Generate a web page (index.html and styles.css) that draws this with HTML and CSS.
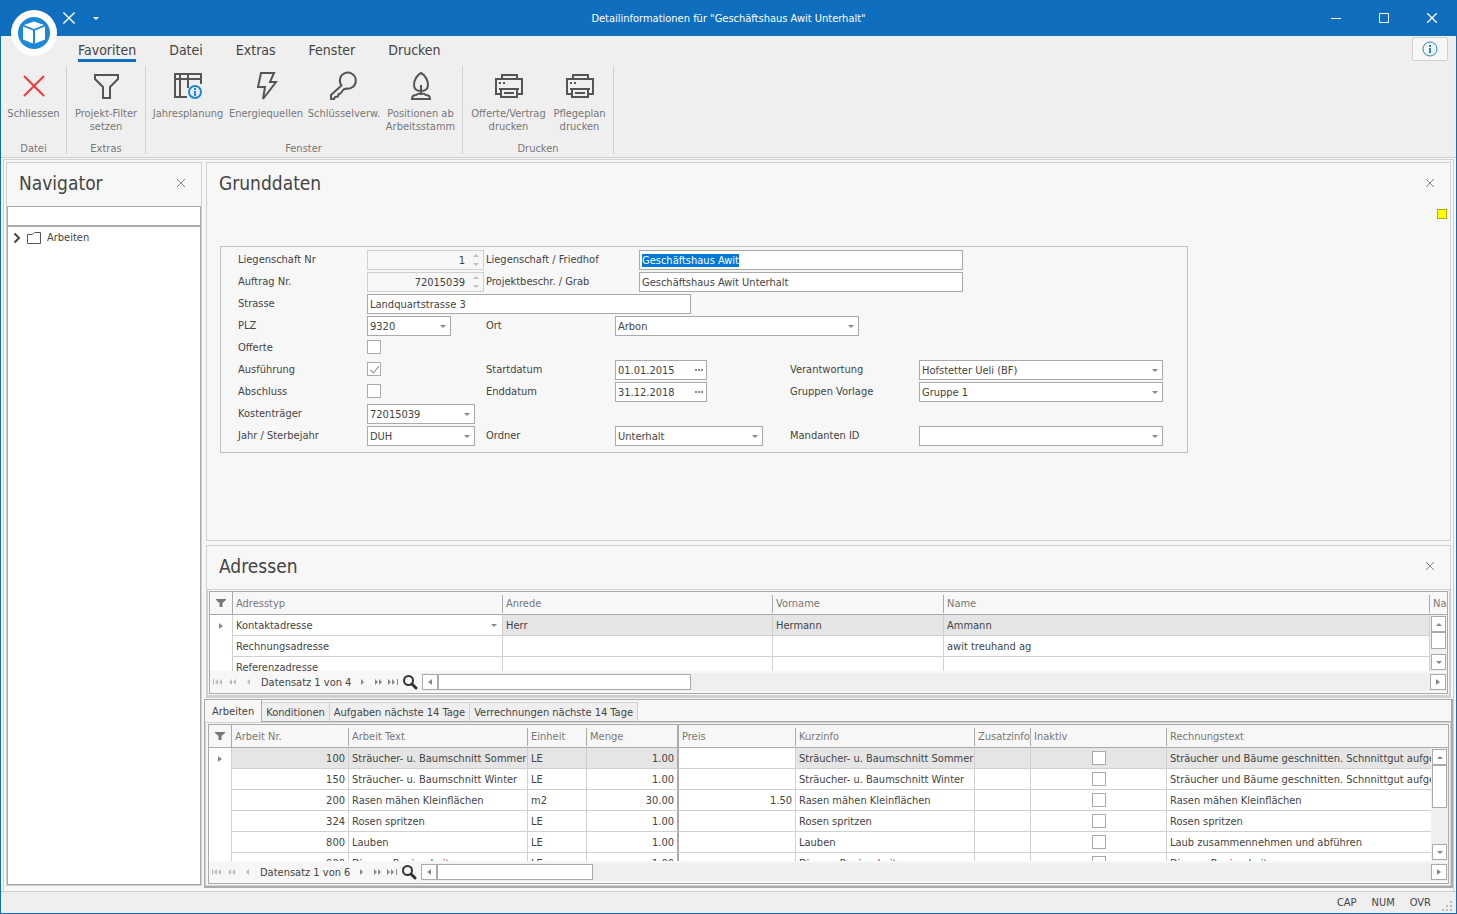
FILE: index.html
```html
<!DOCTYPE html>
<html lang="de">
<head>
<meta charset="utf-8">
<title>Detailinformationen für "Geschäftshaus Awit Unterhalt"</title>
<link rel="stylesheet" href="styles.css">
</head>
<body>
<svg class="sprite" aria-hidden="true">
  <symbol id="i-x" viewBox="0 0 10 10"><path d="M1 1l8 8M9 1l-8 8"/></symbol>
  <symbol id="i-prev" viewBox="0 0 12 10"><path d="M8 2v6L5 5z"/></symbol>
  <symbol id="i-prev2" viewBox="0 0 12 10"><path d="M5 2v6L2 5zM9 2v6L6 5z"/></symbol>
  <symbol id="i-first" viewBox="0 0 12 10"><path d="M1 2h1v6H1zM6 2v6L3 5zM10 2v6L7 5z"/></symbol>
  <symbol id="i-next" viewBox="0 0 12 10"><path d="M4 2v6l3-3z"/></symbol>
  <symbol id="i-next2" viewBox="0 0 12 10"><path d="M3 2v6l3-3zM7 2v6l3-3z"/></symbol>
  <symbol id="i-last" viewBox="0 0 12 10"><path d="M1 2v6l3-3zM5 2v6l3-3zM10 2h1v6h-1z"/></symbol>
  <symbol id="i-search" viewBox="0 0 16 16"><circle cx="6.500" cy="6.500" r="4.500" fill="none" stroke="#333" stroke-width="2"/><path d="M10 10l4 4" stroke="#333" stroke-width="3" stroke-linecap="round"/></symbol>
  <symbol id="i-funnel" viewBox="0 0 10 8"><path d="M0 0h10v1L6.500 4v4h-3V4L0 1z"/></symbol>
  <symbol id="i-printer" viewBox="0 0 32 32"><g fill="none" stroke="#555" stroke-width="2"><path d="M9 9V5h15v4M7 24H3V9h26v15h-4"/><path d="M6 19h20M8 19v8h16v-8M11 23h10"/></g><path d="M6 12h2v2H6zM10 12h2v2h-2z" fill="#555"/></symbol>
</svg>
<div class="window">
  <header class="titlebar">
    <button class="logo" aria-label="Anwendungsmenü">
      <svg viewBox="0 0 46 46"><circle cx="23" cy="23" r="23" fill="#fff"/><circle cx="23" cy="23" r="16" fill="#1e88d8"/><path d="M23 11.500l10 3.500-10 4-10-4z" fill="#fff"/><path d="M12 16.500l10 4v13l-10-4zM34 16.500l-10 4v13l10-4z" fill="#fff"/></svg>
    </button>
    <div class="quick">
      <button aria-label="Schliessen"><svg class="line" width="14" height="14"><use href="#i-x"/></svg></button>
      <button aria-label="Anpassen"><span class="tri-down"></span></button>
    </div>
    <h1>Detailinformationen für "Geschäftshaus Awit Unterhalt"</h1>
    <div class="syskeys">
      <button aria-label="Minimieren"><svg width="10" height="10"><path d="M0 5.500h10" stroke="#fff"/></svg></button>
      <button aria-label="Maximieren"><svg width="10" height="10"><path d="M.5.5h9v9h-9z" fill="none" stroke="#fff"/></svg></button>
      <button aria-label="Fenster schliessen"><svg width="10" height="10"><path d="M0 0l10 10M10 0L0 10" stroke="#fff" stroke-width="1.300"/></svg></button>
    </div>
  </header>

  <section class="ribbon">
    <nav class="tabs">
      <button class="on">Favoriten</button><button>Datei</button><button>Extras</button><button>Fenster</button><button>Drucken</button>
      <button class="info" aria-label="Info"><svg width="16" height="16" fill="none" stroke="#1e88d0"><circle cx="8" cy="8" r="7"/><path d="M8 4v2M8 7v5" stroke-width="2"/></svg></button>
    </nav>
    <div class="groups">
      <div class="group g-close"><div class="tools">
        <button><svg viewBox="0 0 32 32"><path d="M6 6l20 20M26 6L6 26" stroke="#f03a35" stroke-width="2"/></svg>Schliessen</button>
      </div><p>Datei</p></div>
      <div class="group g-extras"><div class="tools">
        <button><svg viewBox="0 0 32 32"><path d="M5 5h23v4l-8 8v11h-7V17L5 9z" fill="none" stroke="#555" stroke-width="2"/></svg>Projekt-Filter<br>setzen</button>
      </div><p>Extras</p></div>
      <div class="group g-window"><div class="tools">
        <button class="w78"><svg viewBox="0 0 32 32"><g fill="none" stroke="#555" stroke-width="2"><path d="M15 27H3V4h26v10M3 9h26M8 4v23M16 4v14"/></g><circle cx="23" cy="22" r="6" fill="#efefef" stroke="#1e88d0" stroke-width="2"/><path d="M23 18v2M23 21v5" stroke="#1e88d0" stroke-width="2"/></svg>Jahresplanung</button>
        <button class="w78"><svg viewBox="0 0 32 32"><path d="M11 3h13l-4 9h6L13 29l2-12H8z" fill="none" stroke="#555" stroke-width="2"/></svg>Energiequellen</button>
        <button class="w78"><svg viewBox="0 0 32 32"><path d="M13.500 15.500a8 8 0 1 1 5 3l-3 1-3 4-2 .5-.5 2.500-3 .5-1 2H3v-4z" fill="none" stroke="#555" stroke-width="2" stroke-linejoin="round"/></svg>Schlüsselverw.</button>
        <button class="w75"><svg viewBox="0 0 32 32"><g fill="none" stroke="#555" stroke-width="2"><path d="M16 3c4 2 7 7 7 12 0 4-3 6-7 6s-7-2-7-6c0-5 3-10 7-12zM16 15v10M7 29c0-3 2-4 4-4 2-2 8-2 10 0 3 0 4 1 4 4z"/></g></svg>Positionen ab<br>Arbeitsstamm</button>
      </div><p>Fenster</p></div>
      <div class="group"><div class="tools">
        <button class="w83"><svg><use href="#i-printer"/></svg>Offerte/Vertrag<br>drucken</button>
        <button class="w59"><svg><use href="#i-printer"/></svg>Pflegeplan<br>drucken</button>
      </div><p>Drucken</p></div>
    </div>
  </section>

  <main class="dock">
    <aside class="navigator">
      <header class="panel-head"><h2>Navigator</h2><button aria-label="Navigator schliessen"><svg class="line" width="10" height="10"><use href="#i-x"/></svg></button></header>
      <input class="nav-search" type="text" aria-label="Suche">
      <ul class="tree"><li>
        <svg width="8" height="12"><path d="M1.500 1.500L6 6l-4.500 4.500" fill="none" stroke="#444" stroke-width="2"/></svg>
        <svg width="14" height="12"><path d="M.5 2.500h5l2-2h6v11H.5z" fill="none" stroke="#555"/></svg>
        <span>Arbeiten</span></li></ul>
    </aside>

    <div class="content">
      <section class="panel basics">
        <header class="panel-head"><h2>Grunddaten</h2><button aria-label="Grunddaten schliessen"><svg class="line" width="10" height="10"><use href="#i-x"/></svg></button></header>
        <div class="marker-row"><span class="marker"></span></div>
        <form class="form">
          <label class="c1 r1" for="f-lnr">Liegenschaft Nr</label>
          <div class="spin c2 r1"><input id="f-lnr" value="1" disabled><span><i class="tri-up"></i><i class="tri-down"></i></span></div>
          <label class="c3 r1" for="f-lg">Liegenschaft / Friedhof</label>
          <input class="c4b r1 w324" id="f-lg" value="Geschäftshaus Awit" autofocus>
          <label class="c1 r2" for="f-anr">Auftrag Nr.</label>
          <div class="spin c2 r2"><input id="f-anr" value="72015039" disabled><span><i class="tri-up"></i><i class="tri-down"></i></span></div>
          <label class="c3 r2" for="f-pb">Projektbeschr. / Grab</label>
          <input class="c4b r2 w324" id="f-pb" value="Geschäftshaus Awit Unterhalt">
          <label class="c1 r3" for="f-str">Strasse</label>
          <input class="c2 r3 w324" id="f-str" value="Landquartstrasse 3">
          <label class="c1 r4" for="f-plz">PLZ</label>
          <div class="combo c2 r4 w84"><select id="f-plz"><option>9320</option></select><i class="tri-down"></i></div>
          <label class="c3 r4" for="f-ort">Ort</label>
          <div class="combo c4 r4 w244"><select id="f-ort"><option>Arbon</option></select><i class="tri-down"></i></div>
          <label class="c1 r5" for="f-off">Offerte</label><input class="c2 r5" type="checkbox" id="f-off">
          <label class="c1 r6" for="f-aus">Ausführung</label><input class="c2 r6" type="checkbox" id="f-aus" checked>
          <label class="c3 r6" for="f-sd">Startdatum</label>
          <div class="date c4 r6"><input id="f-sd" value="01.01.2015"><button type="button" aria-label="Startdatum wählen"><i></i><i></i><i></i></button></div>
          <label class="c5 r6" for="f-ver">Verantwortung</label>
          <div class="combo c6 r6 w244"><select id="f-ver"><option>Hofstetter Ueli (BF)</option></select><i class="tri-down"></i></div>
          <label class="c1 r7" for="f-abs">Abschluss</label><input class="c2 r7" type="checkbox" id="f-abs">
          <label class="c3 r7" for="f-ed">Enddatum</label>
          <div class="date c4 r7"><input id="f-ed" value="31.12.2018"><button type="button" aria-label="Enddatum wählen"><i></i><i></i><i></i></button></div>
          <label class="c5 r7" for="f-gv">Gruppen Vorlage</label>
          <div class="combo c6 r7 w244"><select id="f-gv"><option>Gruppe 1</option></select><i class="tri-down"></i></div>
          <label class="c1 r8" for="f-kt">Kostenträger</label>
          <div class="combo c2 r8 w108"><select id="f-kt"><option>72015039</option></select><i class="tri-down"></i></div>
          <label class="c1 r9" for="f-js">Jahr / Sterbejahr</label>
          <div class="combo c2 r9 w108"><select id="f-js"><option>DUH</option></select><i class="tri-down"></i></div>
          <label class="c3 r9" for="f-or">Ordner</label>
          <div class="combo c4 r9 w148"><select id="f-or"><option>Unterhalt</option></select><i class="tri-down"></i></div>
          <label class="c5 r9" for="f-mi">Mandanten ID</label>
          <div class="combo c6 r9 w244"><select id="f-mi"><option></option></select><i class="tri-down"></i></div>
        </form>
      </section>

      <section class="panel addresses">
        <header class="panel-head"><h2>Adressen</h2><button aria-label="Adressen schliessen"><svg class="line" width="10" height="10"><use href="#i-x"/></svg></button></header>
        <div class="panel-body"><div class="grid">
          <div class="rows rows-a">
            <table>
              <colgroup><col class="k23"><col class="k270"><col class="k270"><col class="k171"><col><col class="k17"></colgroup>
              <thead><tr><th class="ind"><svg width="10" height="8"><use href="#i-funnel"/></svg></th><th>Adresstyp</th><th>Anrede</th><th>Vorname</th><th>Name</th><th>Name</th></tr></thead>
              <tbody>
                <tr class="sel"><td class="ind"><i class="tri-right"></i></td><td class="edit"><div class="cellcombo">Kontaktadresse<i class="tri-down"></i></div></td><td>Herr</td><td>Hermann</td><td>Ammann</td><td></td></tr>
                <tr><td class="ind"></td><td>Rechnungsadresse</td><td></td><td></td><td>awit treuhand ag</td><td></td></tr>
                <tr><td class="ind"></td><td>Referenzadresse</td><td></td><td></td><td></td><td></td></tr>
              </tbody>
            </table>
            <div class="vbar"><button aria-label="Nach oben"><i class="tri-up"></i></button><span class="vthumb short"></span><button class="end" aria-label="Nach unten"><i class="tri-down"></i></button></div>
          </div>
          <div class="pager">
            <div class="steps">
              <button class="dim" aria-label="Erster"><svg><use href="#i-first"/></svg></button><button class="dim" aria-label="Seite zurück"><svg><use href="#i-prev2"/></svg></button><button class="dim" aria-label="Zurück"><svg><use href="#i-prev"/></svg></button>
              <span>Datensatz 1 von 4</span>
              <button aria-label="Weiter"><svg><use href="#i-next"/></svg></button><button aria-label="Seite vor"><svg><use href="#i-next2"/></svg></button><button aria-label="Letzter"><svg><use href="#i-last"/></svg></button>
              <button class="find" aria-label="Suchen"><svg><use href="#i-search"/></svg></button>
            </div>
            <div class="hbar"><button aria-label="Nach links"><i class="tri-left"></i></button><span class="hthumb wide"></span><button class="end" aria-label="Nach rechts"><i class="tri-right"></i></button></div>
          </div>
        </div></div>
      </section>

      <section class="works">
        <nav class="subtabs"><button class="on">Arbeiten</button><button>Konditionen</button><button>Aufgaben nächste 14 Tage</button><button>Verrechnungen nächste 14 Tage</button></nav>
        <div class="works-body"><div class="grid">
          <div class="rows rows-w">
            <table>
              <colgroup><col class="k23"><col class="k117"><col class="k179"><col class="k59"><col class="k92"><col class="k117"><col class="k179"><col class="k56"><col class="k136"><col></colgroup>
              <thead><tr><th class="ind"><svg width="10" height="8"><use href="#i-funnel"/></svg></th><th>Arbeit Nr.</th><th>Arbeit Text</th><th>Einheit</th><th class="fix">Menge</th><th>Preis</th><th>Kurzinfo</th><th>Zusatzinfo</th><th>Inaktiv</th><th>Rechnungstext</th></tr></thead>
              <tbody>
                <tr class="sel"><td class="ind"><i class="tri-right"></i></td><td class="num">100</td><td>Sträucher- u. Baumschnitt Sommer</td><td>LE</td><td class="num fix">1.00</td><td class="edit"></td><td>Sträucher- u. Baumschnitt Sommer</td><td></td><td class="chk"><input type="checkbox" aria-label="Inaktiv 100"></td><td>Sträucher und Bäume geschnitten. Schnnittgut aufgeladen</td></tr>
                <tr><td class="ind"></td><td class="num">150</td><td>Sträucher- u. Baumschnitt Winter</td><td>LE</td><td class="num fix">1.00</td><td></td><td>Sträucher- u. Baumschnitt Winter</td><td></td><td class="chk"><input type="checkbox" aria-label="Inaktiv 150"></td><td>Sträucher und Bäume geschnitten. Schnnittgut aufgeladen</td></tr>
                <tr><td class="ind"></td><td class="num">200</td><td>Rasen mähen Kleinflächen</td><td>m2</td><td class="num fix">30.00</td><td class="num">1.50</td><td>Rasen mähen Kleinflächen</td><td></td><td class="chk"><input type="checkbox" aria-label="Inaktiv 200"></td><td>Rasen mähen Kleinflächen</td></tr>
                <tr><td class="ind"></td><td class="num">324</td><td>Rosen spritzen</td><td>LE</td><td class="num fix">1.00</td><td></td><td>Rosen spritzen</td><td></td><td class="chk"><input type="checkbox" aria-label="Inaktiv 324"></td><td>Rosen spritzen</td></tr>
                <tr><td class="ind"></td><td class="num">800</td><td>Lauben</td><td>LE</td><td class="num fix">1.00</td><td></td><td>Lauben</td><td></td><td class="chk"><input type="checkbox" aria-label="Inaktiv 800"></td><td>Laub zusammennehmen und abführen</td></tr>
                <tr><td class="ind"></td><td class="num">900</td><td>Diverse Regiearbeit</td><td>LE</td><td class="num fix">1.00</td><td></td><td>Diverse Regiearbeit</td><td></td><td class="chk"><input type="checkbox" aria-label="Inaktiv 900"></td><td>Diverse Regiearbeit</td></tr>
              </tbody>
            </table>
            <div class="vbar"><button aria-label="Nach oben"><i class="tri-up"></i></button><span class="vthumb"></span><button class="end" aria-label="Nach unten"><i class="tri-down"></i></button></div>
          </div>
          <div class="pager">
            <div class="steps">
              <button class="dim" aria-label="Erster"><svg><use href="#i-first"/></svg></button><button class="dim" aria-label="Seite zurück"><svg><use href="#i-prev2"/></svg></button><button class="dim" aria-label="Zurück"><svg><use href="#i-prev"/></svg></button>
              <span>Datensatz 1 von 6</span>
              <button aria-label="Weiter"><svg><use href="#i-next"/></svg></button><button aria-label="Seite vor"><svg><use href="#i-next2"/></svg></button><button aria-label="Letzter"><svg><use href="#i-last"/></svg></button>
              <button class="find" aria-label="Suchen"><svg><use href="#i-search"/></svg></button>
            </div>
            <div class="hbar"><button aria-label="Nach links"><i class="tri-left"></i></button><span class="hthumb"></span><button class="end" aria-label="Nach rechts"><i class="tri-right"></i></button></div>
          </div>
        </div></div>
      </section>
    </div>
  </main>

  <footer class="status"><span>CAP</span><span>NUM</span><span>OVR</span>
    <svg width="10" height="10" fill="#bbb"><path d="M8 0h2v2H8zM4 4h2v2H4zM8 4h2v2H8zM0 8h2v2H0zM4 8h2v2H4zM8 8h2v2H8z"/></svg></footer>
</div>
<script src="app.js"></script>
</body>
</html>
```

FILE: styles.css
```css
* { box-sizing: border-box; }
body, h1, h2, p, ul { margin: 0; padding: 0; font-weight: normal; }
body, button, input, select {
  font-family: "DejaVu Sans Condensed", "Noto Sans", sans-serif;
  font-size: 11px;
  color: #444;
}
button { border: 0; padding: 0; background: none; }
svg { display: block; flex: none; }
.sprite { position: absolute; width: 0; height: 0; }
.line { stroke: currentColor; fill: none; }

.tri-down, .tri-up, .tri-left, .tri-right { display: block; width: 0; height: 0; border: 3px solid transparent; }
.tri-down { border-top-color: currentColor; border-bottom: 0; }
.tri-up { border-bottom-color: currentColor; border-top: 0; }
.tri-left { border-right: 4px solid currentColor; border-left: 0; }
.tri-right { border-left: 4px solid currentColor; border-right: 0; }

.window {
  display: flex;
  flex-direction: column;
  min-height: 100vh;
  background: #f7f7f7;
  border: solid #106ebe;
  border-width: 0 1px 1px;
}

/* title bar */
.titlebar { position: relative; display: flex; align-items: center; height: 36px; background: #106ebe; color: #fff; }
.titlebar button { color: #fff; }
.titlebar h1 { flex: 1; font-size: 11px; text-align: center; }
.logo { position: absolute; left: 10px; top: 10px; width: 46px; height: 46px; }
.quick { display: flex; align-items: center; gap: 17px; width: 144px; padding-left: 61px; }
.syskeys { display: flex; width: 144px; }
.syskeys button { display: grid; place-items: center; width: 48px; height: 36px; }

/* ribbon */
.ribbon { background: #efefef; border-bottom: 1px solid #d0d0d0; height: 122px; }
.tabs { display: flex; gap: 33px; padding: 1px 8px 0 77px; height: 30px; align-items: flex-start; }
.tabs button { height: 25px; padding-top: 4px; font-size: 14px; line-height: 18px; border-bottom: 3px solid transparent; white-space: nowrap; }
.tabs .on { border-color: #106ebe; }
.tabs .info { display: grid; place-items: center; width: 36px; height: 24px; margin-left: auto; padding: 0; border: 1px solid #d0d0d0; border-radius: 2px; background: #f7f7f7; }
.groups { display: flex; height: 88px; }
.group { display: flex; flex-direction: column; justify-content: space-between; padding: 0 4px; border-right: 1px solid #d0d0d0; color: #777; text-align: center; }
.group p { line-height: 10px; }
.tools { display: flex; justify-content: center; }
.tools button { display: flex; flex-direction: column; align-items: center; padding-top: 4px; line-height: 13px; color: #777; white-space: nowrap; }
.tools svg { width: 32px; height: 32px; margin-bottom: 5px; }
.g-close { width: 66px; }
.g-extras { width: 79px; }
.g-window { padding: 0 4px 0 3px; }
.w78 { width: 78px; }
.w75 { width: 75px; }
.w83 { width: 83px; }
.w59 { width: 59px; }

/* docking area */
.dock { flex: 1; display: flex; gap: 4px; margin: 1px 2px 0; padding: 2px 2px 3px; border: 1px solid #d0d0d0; border-bottom: 0; }
.navigator { display: flex; flex-direction: column; width: 196px; border: 1px solid #d0d0d0; margin-bottom: 2px; }
.content { flex: 1; min-width: 0; display: flex; flex-direction: column; gap: 4px; }
.panel { border: 1px solid #d0d0d0; }
.panel-head { display: flex; align-items: center; justify-content: space-between; height: 43px; padding: 0 15px 3px 12px; }
.panel-head h2 { font-size: 19px; line-height: 24px; }
.panel-head button { color: #888; }
.nav-search { width: 100%; height: 20px; border: 1px solid #aaa; }
.tree { flex: 1; list-style: none; background: #fff; border: 1px solid #aaa; }
.tree li { display: flex; align-items: center; gap: 6px; height: 21px; padding-left: 5px; }

.basics { flex: 1; }
.marker-row { display: flex; justify-content: flex-end; padding: 3px; }
.marker { width: 10px; height: 10px; background: #ff0; border: 1px solid #b8a800; }

/* form */
.form {
  display: grid;
  grid-template-columns: 129px 119px 129px 24px 151px 129px 244px;
  grid-auto-rows: 20px;
  row-gap: 2px;
  max-width: 968px;
  margin: 24px 13px 0;
  padding: 3px 0 6px 17px;
  border: 1px solid #c0c0c0;
}
.form label { line-height: 19px; white-space: nowrap; }
input, select { border: 1px solid #aaa; border-radius: 0; background: #fff; outline: 0; }
.form input:not([type]), .form select { width: 100%; height: 20px; padding: 0 2px; }
.form select { appearance: none; }
.form input.w324 { width: 324px; }
input::selection { background: #0078d7; color: #fff; }
.c1 { grid-column: 1; }
.c2 { grid-column: 2; }
.c3 { grid-column: 3; }
.c4 { grid-column: 4; }
.c4b { grid-column: 5; }
.c5 { grid-column: 6; }
.c6 { grid-column: 7; }
.r1 { grid-row: 1; }
.r2 { grid-row: 2; }
.r3 { grid-row: 3; }
.r4 { grid-row: 4; }
.r5 { grid-row: 5; }
.r6 { grid-row: 6; }
.r7 { grid-row: 7; }
.r8 { grid-row: 8; }
.r9 { grid-row: 9; }
.w84 { width: 84px; }
.w108 { width: 108px; }
.w148 { width: 148px; }
.w244 { width: 244px; }
.combo, .spin, .date { position: relative; color: #888; }
.combo .tri-down { position: absolute; right: 5px; top: 9px; }
.spin { width: 117px; color: #c0c0c0; }
.form .spin input { padding-right: 18px; text-align: right; background: #f7f7f7; border-color: #d0d0d0; color: #444; }
.spin span { position: absolute; right: 5px; top: 4px; display: grid; gap: 6px; }
.date { width: 92px; }
.date button { position: absolute; right: 4px; top: 9px; display: flex; gap: 1px; }
.date i { width: 2px; height: 2px; background: #888; }
input[type="checkbox"] { appearance: none; position: relative; width: 14px; height: 14px; margin: 0; }
.form input[type="checkbox"] { align-self: start; margin-top: 2px; }
input[type="checkbox"]:checked::before { content: ""; position: absolute; left: 4px; top: 1px; width: 4px; height: 8px; border: solid #888; border-width: 0 1px 1px 0; transform: rotate(40deg); }

/* data grids */
.panel-body { padding: 1px; border: 1px solid #d0d0d0; border-width: 1px 1px 2px 1px; }
.grid { border: 1px solid #aaa; }
.rows { position: relative; overflow: hidden; background: #fff; }
.rows-a { height: 79px; }
.rows-w { height: 136px; }
table { width: 100%; table-layout: fixed; border-collapse: separate; border-spacing: 0; }
.k17 { width: 17px; }
.k23 { width: 23px; }
.k56 { width: 56px; }
.k59 { width: 59px; }
.k92 { width: 92px; }
.k117 { width: 117px; }
.k136 { width: 136px; }
.k171 { width: 171px; }
.k179 { width: 179px; }
.k270 { width: 270px; }
th, td { padding: 0 0 0 3px; text-align: left; font-weight: normal; white-space: nowrap; overflow: hidden; }
th { height: 23px; color: #777; background: linear-gradient(#aaa, #aaa) right 3px / 1px 18px no-repeat #f7f7f7; border-bottom: 1px solid #aaa; }
th:last-child { background: #f7f7f7; }
th.ind { background: #f7f7f7; border-right: 1px solid #aaa; }
td { height: 21px; border: solid #d0d0d0; border-width: 0 1px 1px 0; }
td.ind { border-bottom: 0; color: #888; }
.ind { padding: 0 6px; }
.ind svg { fill: #777; }
.ind i { margin-left: 3px; }
.num { text-align: right; padding-right: 3px; }
.chk { text-align: center; padding: 0; }
.chk input { display: block; margin: 0 auto; }
.sel td { background: #e5e5e5; }
.sel .ind, .sel .edit { background: #fff; }
th.fix { background: #f7f7f7; }
.fix { border-right: 2px solid #aaa; }
.cellcombo { display: flex; align-items: center; justify-content: space-between; padding-right: 5px; }
.cellcombo i { color: #888; }

/* scroll bars */
.vbar { position: absolute; right: 0; top: 23px; bottom: 0; display: flex; flex-direction: column; width: 17px; padding: 1px; background: #efefef; }
.vbar button, .hbar button { display: grid; place-items: center; flex: none; width: 16px; height: 16px; border: 1px solid #aaa; background: #fff; color: #888; }
.vbar button { width: 15px; }
.vthumb { height: 43px; border: 1px solid #aaa; background: #fff; }
.vthumb.short { height: 17px; }
.vbar .end { margin-top: auto; }
.hbar { flex: 1; display: flex; align-items: center; background: #efefef; height: 18px; padding-right: 1px; }
.hthumb { width: 156px; height: 16px; border: 1px solid #aaa; background: #fff; }
.hthumb.wide { width: 253px; }
.hbar .end { margin-left: auto; }
.pager { display: flex; align-items: center; height: 22px; }
.steps { display: flex; align-items: center; width: 212px; padding-left: 2px; gap: 3px; }
.steps svg { width: 12px; height: 10px; fill: #888; }
.steps .dim svg { fill: #bbb; }
.steps span { width: 97px; padding-left: 4px; white-space: nowrap; }
.steps .find svg { width: 16px; height: 16px; }

/* works */
.works { margin: -3px -2px 0 -2px; border: 1px solid #aaa; border-width: 1px 2px 2px 1px; }
.subtabs { display: flex; align-items: flex-end; height: 22px; padding: 0; border-bottom: 1px solid #aaa; }
.subtabs button { height: 19px; padding: 0 4px; border: 1px solid #d0d0d0; border-width: 1px 1px 0 0; background: #efefef; white-space: nowrap; }
.subtabs .on { height: 22px; padding: 0 7px; margin-bottom: -1px; border-width: 0 1px 0 0; border-color: #aaa; background: #f7f7f7; }
.works-body { padding: 1px 1px 1px 2px; border: 1px solid #d0d0d0; }

.status { display: flex; align-items: center; justify-content: flex-end; gap: 15px; height: 22px; padding-right: 4px; background: #efefef; border-top: 1px solid #d0d0d0; }
.status svg { margin: 6px 0 0 -4px; }
```

FILE: app.js
```js
const field = document.getElementById("f-lg");
field.focus();
field.select();
```
